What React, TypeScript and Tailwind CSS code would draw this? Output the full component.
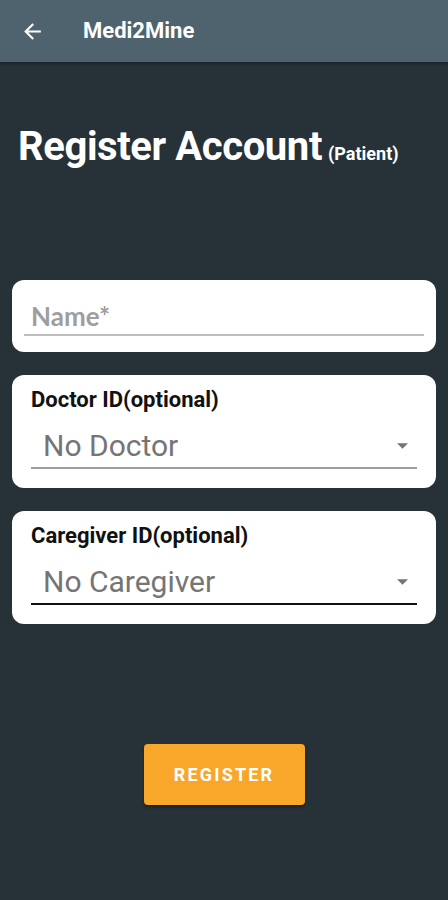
import React from "react";

const Caret = () => (
  <svg width="11" height="6" viewBox="0 0 10 5" className="shrink-0">
    <path d="M0 0 L10 0 L5 5 Z" fill="#757575" />
  </svg>
);

export default function App() {
  return (
    <div className="w-[448px] h-[900px] bg-[#263238] flex flex-col" style={{ fontFamily: "Roboto, 'Liberation Sans', sans-serif" }}>
      <div className="h-[62px] bg-[#4e636d] flex items-center shrink-0 shadow-[0_2px_3px_rgba(0,0,0,0.3)]">
        <svg width="25" height="25" viewBox="0 0 24 24" className="ml-[20px]">
          <path d="M20 11H7.83l5.59-5.59L12 4l-8 8 8 8 1.41-1.41L7.83 13H20v-2z" fill="#ffffff" />
        </svg>
        <span className="ml-[38px] text-white text-[22px] font-bold leading-[28px]">Medi2Mine</span>
      </div>

      <div className="mt-[61px] ml-[18px] flex items-baseline text-white leading-[48px]">
        <span className="text-[40px] font-bold tracking-[-0.4px]">Register Account</span>
        <span className="ml-[6px] text-[18px] font-bold">(Patient)</span>
      </div>

      <div className="mt-[102px] mx-[12px] bg-white rounded-[12px] h-[72px] px-[12px] pt-[20px]">
        <div className="border-b-[2px] border-[#bdbdbd] pb-[2px] pl-[7px]">
          <span className="text-[26px] font-bold text-[#9e9e9e] leading-[32px] block" style={{ fontFamily: "Lato, 'Liberation Sans', sans-serif" }}>Name*</span>
        </div>
      </div>

      <div className="mt-[23px] mx-[12px] bg-white rounded-[12px] h-[113px] px-[19px] pt-[12px]">
        <div className="text-[22px] font-bold text-[#111] leading-[26px]">Doctor ID(optional)</div>
        <div className="mt-[16px] border-b-[2px] border-[#9e9e9e] flex items-center justify-between pl-[12px] pr-[9px] pb-[4px]">
          <span className="text-[30px] text-[#757575] leading-[34px]">No Doctor</span>
          <Caret />
        </div>
      </div>

      <div className="mt-[23px] mx-[12px] bg-white rounded-[12px] h-[113px] px-[19px] pt-[12px]">
        <div className="text-[22px] font-bold text-[#111] leading-[26px]">Caregiver ID(optional)</div>
        <div className="mt-[16px] border-b-[2px] border-[#111] flex items-center justify-between pl-[12px] pr-[9px] pb-[4px]">
          <span className="text-[30px] text-[#757575] leading-[34px]">No Caregiver</span>
          <Caret />
        </div>
      </div>

      <div className="mt-[120px] flex justify-center">
        <button className="w-[161px] h-[61px] bg-[#f9a72b] rounded-[4px] text-white text-[18px] font-bold tracking-[2.2px] shadow-[0_2px_3px_rgba(0,0,0,0.4)]">
          REGISTER
        </button>
      </div>
    </div>
  );
}
